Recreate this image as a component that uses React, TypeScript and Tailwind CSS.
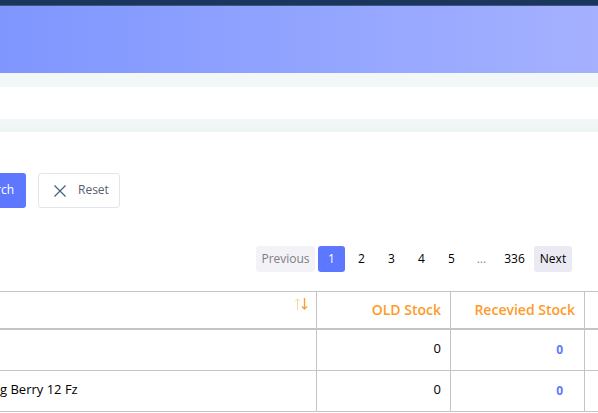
import React from "react";

const pages = ["2", "3", "4", "5"];

const rows = [
  { name: "", oldStock: 0, received: 0 },
  { name: "g Berry 12 Fz", oldStock: 0, received: 0 },
];

function Pagination() {
  return (
    <nav aria-label="Pagination" className="flex justify-end gap-[3px] pr-[26px] text-[12px]">
      <button disabled className="h-[26px] w-[59px] rounded-[3px] bg-[#f3f2f7] text-[#7e7d82]">
        Previous
      </button>
      <button aria-current="page" className="h-[26px] w-[27px] rounded-[3px] bg-[#5d78ff] text-white">
        1
      </button>
      {pages.map((page) => (
        <button key={page} className="h-[26px] w-[27px] text-black">
          {page}
        </button>
      ))}
      <span className="h-[26px] w-[27px] text-center leading-[26px] text-[#8c8c8c]">…</span>
      <button className="h-[26px] w-[33px] text-black">336</button>
      <button className="h-[26px] w-[38px] rounded-[3px] bg-[#ebe9f2] text-black">Next</button>
    </nav>
  );
}

function SortArrows() {
  return (
    <svg width="14" height="12" viewBox="0 0 14 12" fill="none" aria-hidden="true">
      <path d="M3.5 12V1M1 3.5L3.5 1L6 3.5" stroke="#fd9b2a" strokeOpacity="0.4" />
      <path d="M10.5 0V11M8 8.5L10.5 11L13 8.5" stroke="#f7a03a" strokeWidth="1.4" />
    </svg>
  );
}

function StockTable() {
  return (
    <table className="w-full table-fixed border-separate border-spacing-0 border-t border-[#c4c4c4]">
      <colgroup>
        <col />
        <col className="w-[134px]" />
        <col className="w-[134px]" />
        <col className="w-[13px]" />
      </colgroup>
      <thead>
        <tr className="h-[38px] text-[14px] text-[#fd9b2a]">
          <th className="border-r border-b-2 border-[#c4c4c4] p-0 pt-[6px] pr-2 align-top">
            <div className="flex justify-end">
              <SortArrows />
            </div>
          </th>
          <th className="border-r border-b-2 border-[#c4c4c4] p-0 pr-[9px] pb-[2px] text-right font-semibold">
            OLD Stock
          </th>
          <th className="border-r border-b-2 border-[#c4c4c4] p-0 pr-[9px] pb-[2px] text-right font-semibold">
            Recevied Stock
          </th>
          <th className="border-b-2 border-[#c4c4c4] p-0" />
        </tr>
      </thead>
      <tbody className="text-[13px] text-black">
        {rows.map((row, index) => (
          <tr key={index} className="h-[41px]">
            <td className="border-r border-b border-[#c4c4c4] p-0 pb-[2px]">{row.name}</td>
            <td className="border-r border-b border-[#c4c4c4] p-0 pr-[9px] pb-[2px] text-right">{row.oldStock}</td>
            <td className="border-r border-b border-[#c4c4c4] p-0 pr-[21px] text-right text-[12px] font-bold text-[#5d78ff]">
              {row.received}
            </td>
            <td className="border-b border-[#c4c4c4] p-0" />
          </tr>
        ))}
      </tbody>
    </table>
  );
}

export default function App() {
  return (
    <div className="w-full bg-white font-['Open_Sans',sans-serif]">
      <header>
        <div className="h-[6px] border-b border-[#405580] bg-[#1b365d]" />
        <div className="h-[67px] bg-linear-to-r from-[#7f96ff] to-[#a5b1ff]" />
      </header>
      <div className="h-[14px] bg-[#f2f8f8]" />
      <div className="h-8 bg-white" />
      <div className="h-[13px] bg-linear-to-b from-[#f2f8f8] to-[#eef3f4]" />
      <main className="pt-[41px]">
        <div className="flex gap-3 text-[12px]">
          <button aria-label="Search" className="flex h-[35px] w-[26px] items-center justify-end rounded-r-[3px] bg-[#5d78ff] pr-3 pb-[2px] text-white">
            rch
          </button>
          <button className="flex h-[35px] w-[82px] items-center gap-3 rounded-[3px] border border-[#e2e5ec] pl-[15px] text-[#595d6e]">
            <svg width="12" height="12" viewBox="0 0 12 12" fill="none" aria-hidden="true">
              <path d="M0.5 0.5L11.5 11.5M11.5 0.5L0.5 11.5" stroke="#43607a" strokeWidth="1.2" />
            </svg>
            <span className="pb-[2px]">Reset</span>
          </button>
        </div>
        <div className="pt-[38px] pb-[19px]">
          <Pagination />
        </div>
        <StockTable />
      </main>
    </div>
  );
}
